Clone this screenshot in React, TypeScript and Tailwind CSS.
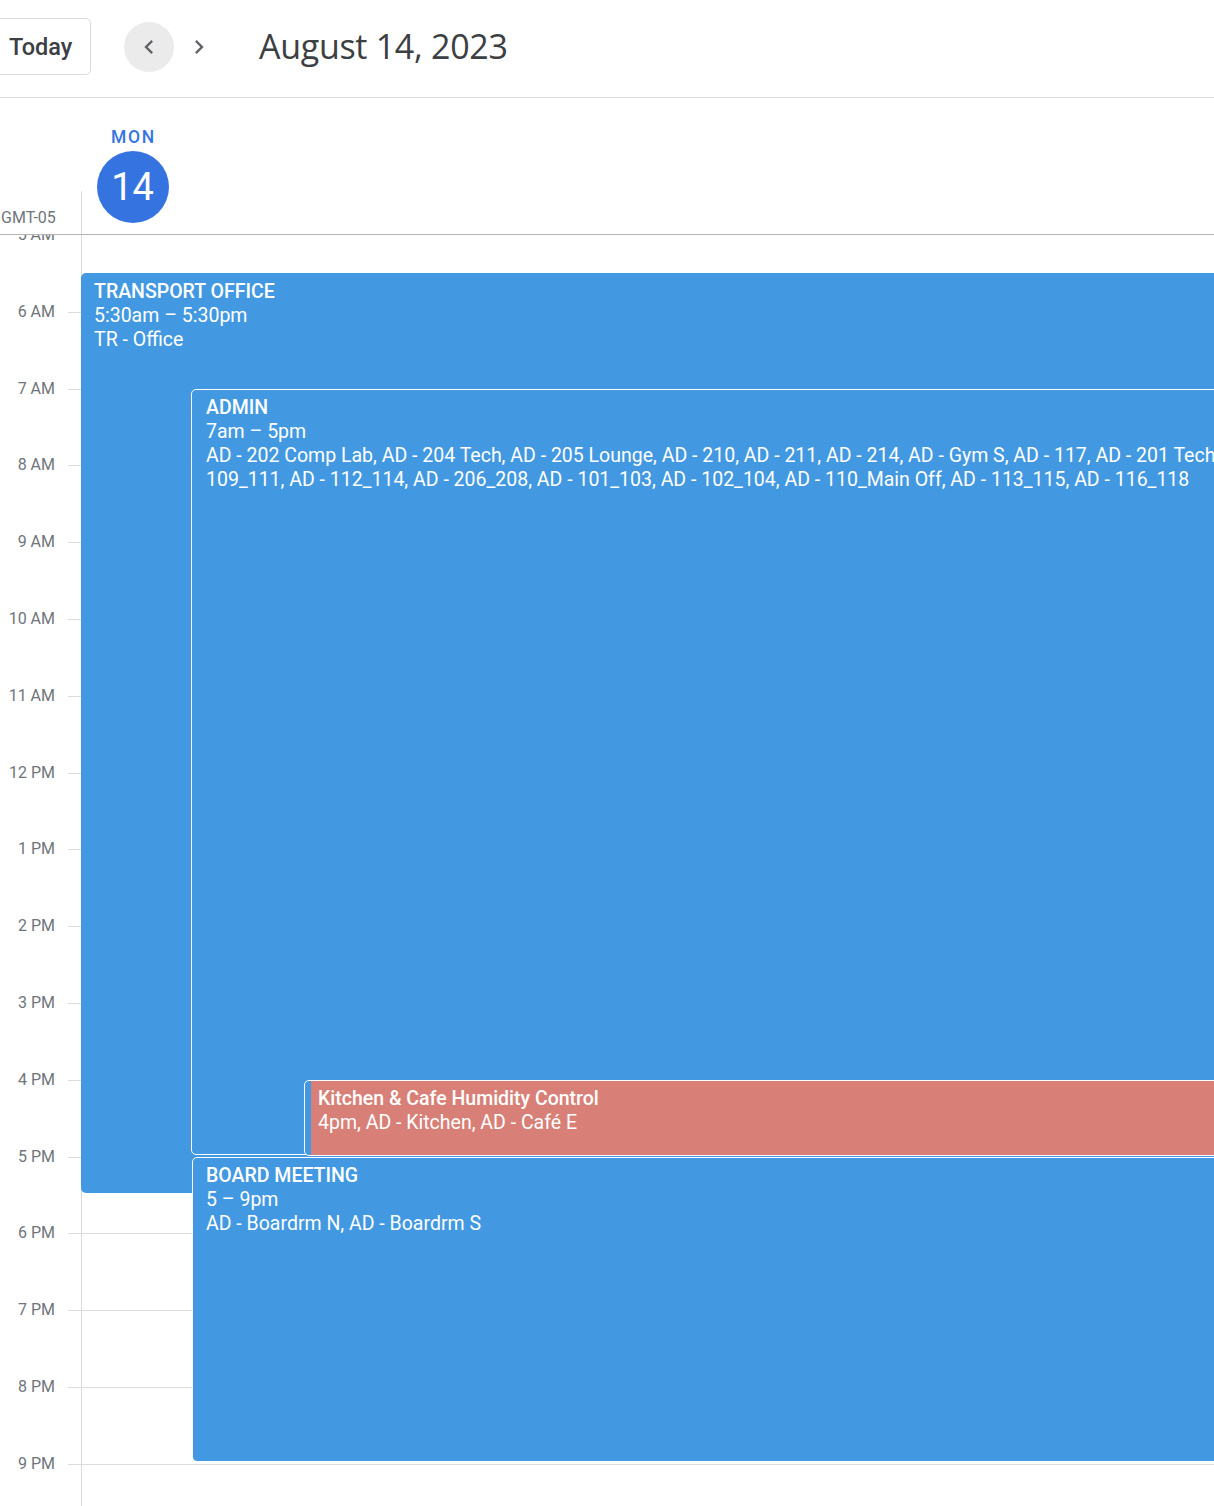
import React from "react";

const HOUR = 76.8;
const hours = ["5 AM", "6 AM", "7 AM", "8 AM", "9 AM", "10 AM", "11 AM", "12 PM", "1 PM", "2 PM", "3 PM", "4 PM", "5 PM", "6 PM", "7 PM", "8 PM", "9 PM", ""];

const ChevronLeft = () => (
  <svg width="28" height="28" viewBox="0 0 24 24" fill="#5f6368">
    <path d="M15.41 7.41 14 6l-6 6 6 6 1.41-1.41L10.83 12z" />
  </svg>
);

const ChevronRight = () => (
  <svg width="28" height="28" viewBox="0 0 24 24" fill="#5f6368">
    <path d="M8.59 16.59 10 18l6-6-6-6-1.41 1.41L13.17 12z" />
  </svg>
);

interface EventProps {
  start: number;
  end: number;
  left: number;
  bordered?: boolean;
  children: React.ReactNode;
}

const CalEvent = ({ start, end, left, bordered, children }: EventProps) => (
  <div
    className={`absolute right-[-10px] rounded-[5px] bg-[#4299e1] text-white overflow-hidden ${bordered ? "border border-white" : ""}`}
    style={{ top: start * HOUR, height: (end - start) * HOUR - 2, left }}
  >
    {children}
  </div>
);

export default function App() {
  return (
    <div className="w-[1214px] h-[1506px] overflow-hidden bg-white flex flex-col font-['Roboto',sans-serif]">
      {/* toolbar */}
      <div className="h-[98px] shrink-0 border-b border-[#dadce0] flex items-center">
        <button className="ml-[-10px] h-[57px] w-[101px] rounded-[5px] border border-[#dadce0] pl-[18px] pt-[2px] text-left text-[23.5px] font-medium text-[#3c4043] mt-[-4px]">
          Today
        </button>
        <div className="ml-[33px] flex items-center mt-[-4px]">
          <div className="w-[50px] h-[50px] rounded-full bg-[#ebebeb] flex items-center justify-center">
            <ChevronLeft />
          </div>
          <div className="w-[50px] h-[50px] rounded-full flex items-center justify-center">
            <ChevronRight />
          </div>
        </div>
        <div className="ml-[35px] text-[34px] text-[#3c4043] mt-[-4px] font-['Open_Sans',sans-serif] tracking-[-0.3px]">
          August 14, 2023
        </div>
      </div>

      {/* day header */}
      <div className="h-[136px] shrink-0 flex">
        <div className="w-[81px] flex flex-col justify-end">
          <div className="text-[16px] text-[#70757a] pl-[1px] pb-[4px] whitespace-nowrap">GMT-05</div>
        </div>
        <div className="flex-1 flex flex-col">
          <div className="w-[102px] flex flex-col items-center pl-[1px]">
            <div className="mt-[28px] text-[17.5px] font-medium tracking-[1.8px] text-[#3574e0] leading-[22px] pl-[2px]">MON</div>
            <div className="mt-[3px] w-[72px] h-[72px] rounded-full bg-[#3574e0] text-white text-[38px] flex items-center justify-center">
              14
            </div>
          </div>
          <div className="flex-1 border-l border-[#dadce0] mt-[-32px]" />
        </div>
      </div>

      {/* grid */}
      <div className="flex-1 relative overflow-hidden flex border-t border-[#b5b5b5]">
        <div className="w-[81px] shrink-0 relative">
          {hours.map((h, i) => (
            <div key={i} className="relative" style={{ height: HOUR }}>
              {h && (
                <div className="absolute right-[26px] top-0 -translate-y-1/2 text-[16px] text-[#70757a] leading-[18px] whitespace-nowrap">{h}</div>
              )}
              {i > 0 && <div className="absolute right-0 top-0 w-[13px] border-t border-[#dadce0]" />}
            </div>
          ))}
        </div>
        <div className="flex-1 relative border-l border-[#dadce0]">
          {hours.map((h, i) => (
            <div key={i} className={i > 0 ? "border-t border-[#dadce0]" : ""} style={{ height: HOUR }} />
          ))}

          <CalEvent start={0.5} end={12.5} left={-1}>
            <div className="pt-[7px] pl-[13px] text-[19.5px] leading-[24px]">
              <div className="font-medium">TRANSPORT OFFICE</div>
              <div>5:30am – 5:30pm</div>
              <div>TR - Office</div>
            </div>
          </CalEvent>

          <CalEvent start={2} end={12} left={109} bordered>
            <div className="pt-[6px] pl-[14px] text-[19.5px] leading-[24px] whitespace-nowrap">
              <div className="font-medium">ADMIN</div>
              <div>7am – 5pm</div>
              <div>AD - 202 Comp Lab, AD - 204 Tech, AD - 205 Lounge, AD - 210, AD - 211, AD - 214, AD - Gym S, AD - 117, AD - 201 Tech, AD -</div>
              <div>109_111, AD - 112_114, AD - 206_208, AD - 101_103, AD - 102_104, AD - 110_Main Off, AD - 113_115, AD - 116_118</div>
            </div>
          </CalEvent>

          <div
            className="absolute right-[-10px] rounded-[5px] bg-[#4299e1] border border-white pl-[6px] overflow-hidden"
            style={{ top: 11 * HOUR, height: HOUR - 1, left: 222 }}
          >
            <div className="h-full bg-[#d88077] text-white pt-[6px] pl-[7px] text-[19.5px] leading-[24px]">
              <div className="font-medium">Kitchen &amp; Cafe Humidity Control</div>
              <div>4pm, AD - Kitchen, AD - Café E</div>
            </div>
          </div>

          <CalEvent start={12} end={16} left={110} bordered>
            <div className="pt-[6px] pl-[13px] text-[19.5px] leading-[24px]">
              <div className="font-medium">BOARD MEETING</div>
              <div>5 – 9pm</div>
              <div>AD - Boardrm N, AD - Boardrm S</div>
            </div>
          </CalEvent>
        </div>
      </div>
    </div>
  );
}
